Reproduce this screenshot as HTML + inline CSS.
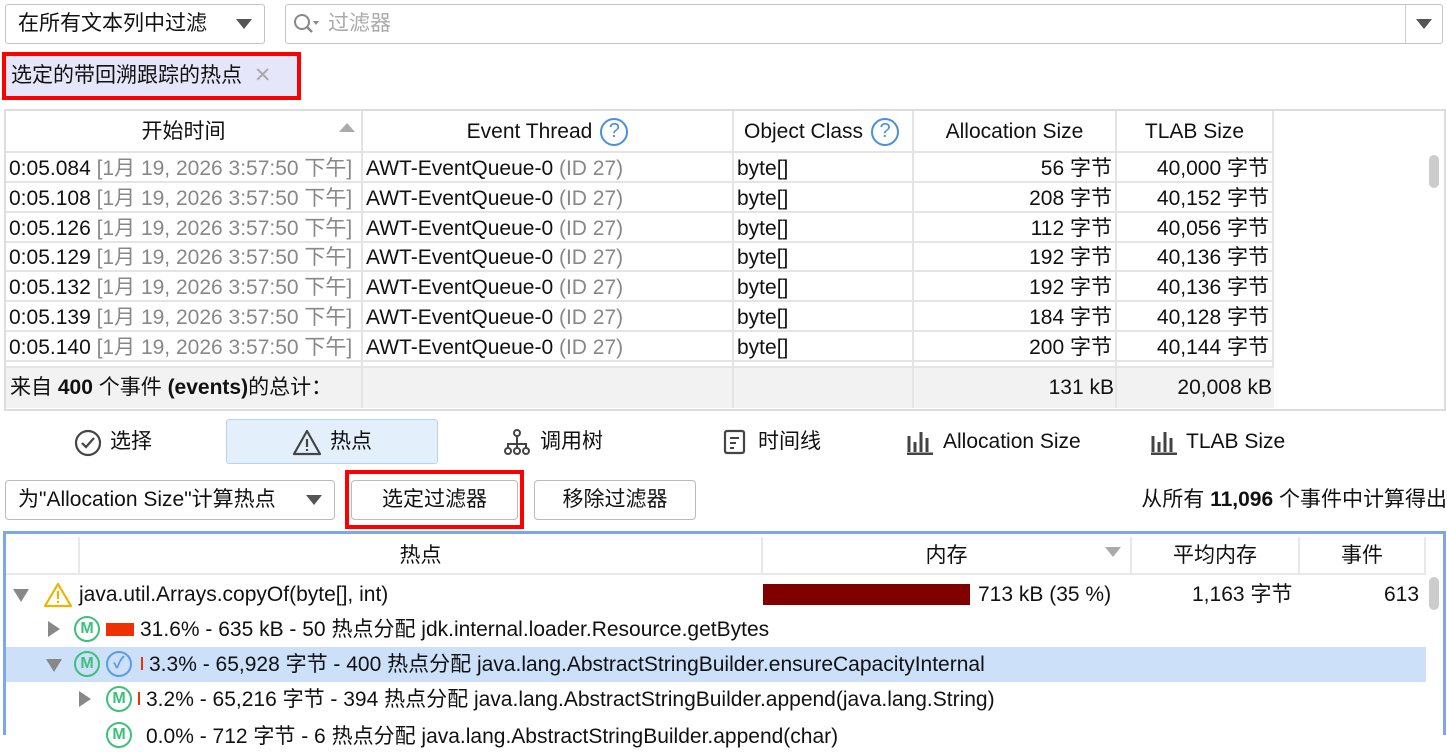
<!DOCTYPE html>
<html><head><meta charset="utf-8"><style>
*{box-sizing:border-box;margin:0;padding:0}
body{width:1447px;height:735px;overflow:hidden;background:#fff;font-family:"Liberation Sans","Noto Sans CJK SC",sans-serif;font-size:21px;color:#111;position:relative;letter-spacing:0}
.a{position:absolute;white-space:nowrap}
.box{position:absolute;border:1px solid #c4c4c4;border-radius:3px;background:#fff}
.tri{position:absolute;width:0;height:0;border-left:8px solid transparent;border-right:8px solid transparent;border-top:10px solid #555}
.g{color:#888}
.cell{position:absolute;height:30px;line-height:31px;white-space:nowrap;overflow:hidden;border-bottom:2px solid #e4e4e4;border-right:2px solid #e4e4e4}
.r{text-align:right;padding-right:3px}
.hd{position:absolute;top:111px;height:42px;line-height:42px;text-align:center;border-right:2px solid #e4e4e4;border-bottom:2px solid #e4e4e4}
.q{display:inline-block;width:28px;height:28px;border:2.5px solid #4a90e2;border-radius:50%;color:#4a90e2;font-size:20px;line-height:23px;text-align:center;vertical-align:middle;margin-left:8px}
.btn{position:absolute;border:1px solid #bbb;border-radius:4px;background:#fff;text-align:center;line-height:38px}
.th{position:absolute;top:537px;height:38px;line-height:38px;text-align:center;border-right:2px solid #e8e8e8;border-bottom:2px solid #e8e8e8}
.m{display:inline-block;width:26px;height:26px;border:2.5px solid #3cc07a;border-radius:50%;color:#3cc07a;font-size:16px;font-weight:bold;line-height:21px;text-align:center;vertical-align:middle}
.rt{position:absolute;width:0;height:0;border-top:8px solid transparent;border-bottom:8px solid transparent;border-left:12px solid #888}
.dt{position:absolute;width:0;height:0;border-left:8px solid transparent;border-right:8px solid transparent;border-top:13px solid #888}
</style></head><body>

<div class="box" style="left:5px;top:4px;width:260px;height:40px"></div>
<div class="a" style="left:18px;top:10px;line-height:28px">在所有文本列中过滤</div>
<div class="tri" style="left:236px;top:19px"></div>
<div class="box" style="left:285px;top:4px;width:1158px;height:40px"></div>
<div class="a" style="left:1405px;top:5px;width:1px;height:38px;background:#ccc"></div>
<div class="tri" style="left:1416px;top:19px"></div>
<svg class="a" style="left:292px;top:12px" width="32" height="24"><circle cx="10" cy="10" r="7" fill="none" stroke="#888" stroke-width="2"/><path d="M15 15l5 5" stroke="#888" stroke-width="2.5"/><path d="M21 9h6l-3 4z" fill="#888"/></svg>
<div class="a g" style="left:328px;top:10px;line-height:28px;color:#aaa">过滤器</div>

<div class="a" style="left:2px;top:52px;width:299px;height:48px;border:4px solid #f00;background:#e6e6fa"></div>
<div class="a" style="left:11px;top:61px;line-height:30px">选定的带回溯跟踪的热点 <span style="color:#aaa;margin-left:6px">✕</span></div>

<!-- table -->
<div class="a" style="left:4px;top:109px;width:1442px;height:302px;border:2px solid #ddd;background:#fff"></div>
<div class="hd" style="left:6px;width:357px">开始时间</div>
<div class="a" style="left:339px;top:123px;width:0;height:0;border-left:8px solid transparent;border-right:8px solid transparent;border-bottom:9px solid #aaa"></div>
<div class="hd" style="left:363px;width:371px">Event Thread<span class="q">?</span></div>
<div class="hd" style="left:734px;width:180px;text-align:left;padding-left:10px">Object Class<span class="q">?</span></div>
<div class="hd" style="left:914px;width:203px">Allocation Size</div>
<div class="hd" style="left:1117px;width:157px">TLAB Size</div>
<div class="a" style="left:1429px;top:155px;width:10px;height:33px;background:#ccc;border-radius:5px"></div>

<div id="rows"></div>
<script>
var d=[["084","56","40,000"],["108","208","40,152"],["126","112","40,056"],["129","192","40,136"],["132","192","40,136"],["139","184","40,128"],["140","200","40,144"],["","",""]];
var h="";
for(var i=0;i<8;i++){var t=153+i*29.8;var x=d[i];
h+='<div class="cell" style="left:6px;top:'+t+'px;width:357px;padding-left:3px">'+(x[0]?'0:05.'+x[0]+' <span class="g">[1月 19, 2026 3:57:50 下午]</span>':'')+'</div>';
h+='<div class="cell" style="left:363px;top:'+t+'px;width:371px;padding-left:3px">'+(x[0]?'AWT-EventQueue-0 <span class="g">(ID 27)</span>':'')+'</div>';
h+='<div class="cell" style="left:734px;top:'+t+'px;width:180px;padding-left:3px">'+(x[0]?'byte[]':'')+'</div>';
h+='<div class="cell r" style="left:914px;top:'+t+'px;width:203px">'+(x[1]?x[1]+' 字节':'')+'</div>';
h+='<div class="cell r" style="left:1117px;top:'+t+'px;width:157px">'+(x[2]?x[2]+' 字节':'')+'</div>';}
document.getElementById('rows').innerHTML=h;
</script>
<div class="a" style="left:6px;top:366px;width:1268px;height:42px;background:#f2f2f2;border-top:2px solid #e4e4e4"></div>
<div class="a" style="left:10px;top:368px;line-height:40px">来自 <b>400</b> 个事件 <b>(events)</b>的总计：</div>
<div class="a" style="left:361px;top:368px;width:2px;height:40px;background:#e4e4e4"></div>
<div class="a" style="left:732px;top:368px;width:2px;height:40px;background:#e4e4e4"></div>
<div class="a" style="left:912px;top:368px;width:2px;height:40px;background:#e4e4e4"></div>
<div class="a" style="left:1115px;top:368px;width:2px;height:40px;background:#e4e4e4"></div>
<div class="a" style="left:914px;top:368px;width:200px;line-height:40px;text-align:right">131 kB</div>
<div class="a" style="left:1117px;top:368px;width:155px;line-height:40px;text-align:right">20,008 kB</div>

<!-- tabs -->
<div class="a" style="left:226px;top:419px;width:212px;height:45px;background:#e4effc;border:1px solid #b9d3f0;border-radius:3px"></div>
<svg class="a" style="left:74px;top:429px" width="28" height="28"><circle cx="14" cy="14" r="12" fill="none" stroke="#444" stroke-width="2.2"/><path d="M8 14l4 4 8-9" fill="none" stroke="#444" stroke-width="2.2"/></svg>
<div class="a" style="left:110px;top:427px;line-height:30px">选择</div>
<svg class="a" style="left:292px;top:428px" width="30" height="28"><path d="M15 3L28 26H2z" fill="none" stroke="#444" stroke-width="2.2" stroke-linejoin="round"/><path d="M15 11v8M15 21v2" stroke="#444" stroke-width="2.2"/></svg>
<div class="a" style="left:330px;top:427px;line-height:30px">热点</div>
<svg class="a" style="left:503px;top:428px" width="28" height="28"><circle cx="14" cy="5" r="3" fill="none" stroke="#444" stroke-width="2"/><path d="M14 8v7M5 21v-5h18v5M14 15v6" stroke="#444" stroke-width="2" fill="none"/><circle cx="5" cy="23" r="3" fill="none" stroke="#444" stroke-width="2"/><circle cx="14" cy="23" r="3" fill="none" stroke="#444" stroke-width="2"/><circle cx="23" cy="23" r="3" fill="none" stroke="#444" stroke-width="2"/></svg>
<div class="a" style="left:540px;top:427px;line-height:30px">调用树</div>
<svg class="a" style="left:723px;top:429px" width="24" height="26"><rect x="2" y="2" width="19" height="22" rx="2" fill="none" stroke="#444" stroke-width="2.2"/><path d="M7 9h9M7 14h6M7 19h4" stroke="#444" stroke-width="2"/></svg>
<div class="a" style="left:758px;top:427px;line-height:30px">时间线</div>
<svg class="a" style="left:906px;top:429px" width="28" height="26"><path d="M3 7v16M9 13v10M15 3v20M21 9v14M1 25h26" stroke="#444" stroke-width="3"/></svg>
<div class="a" style="left:943px;top:427px;line-height:30px">Allocation Size</div>
<svg class="a" style="left:1150px;top:429px" width="28" height="26"><path d="M3 7v16M9 13v10M15 3v20M21 9v14M1 25h26" stroke="#444" stroke-width="3"/></svg>
<div class="a" style="left:1186px;top:427px;line-height:30px">TLAB Size</div>

<!-- controls -->
<div class="btn" style="left:5px;top:480px;width:330px;height:40px;text-align:left;padding-left:12px">为"Allocation Size"计算热点</div>
<div class="tri" style="left:306px;top:495px"></div>
<div class="a" style="left:345px;top:470px;width:179px;height:59px;border:4px solid #f00"></div>
<div class="btn" style="left:351px;top:480px;width:167px;height:40px">选定过滤器</div>
<div class="btn" style="left:534px;top:480px;width:162px;height:40px">移除过滤器</div>
<div class="a" style="right:0;top:485px;line-height:30px">从所有 <b>11,096</b> 个事件中计算得出</div>

<!-- tree -->
<div class="a" style="left:3px;top:531px;width:1443px;height:204px;border:3px solid #7aa9e6;border-bottom:none"></div>
<div class="th" style="left:6px;width:74px"></div>
<div class="th" style="left:80px;width:683px">热点</div>
<div class="th" style="left:763px;width:369px">内存</div>
<div class="a" style="left:1105px;top:547px;width:0;height:0;border-left:8px solid transparent;border-right:8px solid transparent;border-top:10px solid #aaa"></div>
<div class="th" style="left:1132px;width:168px">平均内存</div>
<div class="th" style="left:1300px;width:126px">事件</div>
<div class="a" style="left:1429px;top:577px;width:10px;height:33px;background:#ccc;border-radius:5px"></div>

<div class="a" style="left:6px;top:647px;width:1420px;height:35px;background:#cce0fa"></div>
<div class="dt" style="left:13px;top:589px"></div>
<svg class="a" style="left:43px;top:582px" width="30" height="26"><path d="M15 2L28 24H2z" fill="#fff" stroke="#f0b400" stroke-width="2.2" stroke-linejoin="round"/><path d="M15 9v8M15 19v2" stroke="#f0b400" stroke-width="2.2"/></svg>
<div class="a" style="left:79px;top:580px;line-height:30px">java.util.Arrays.copyOf(byte[], int)</div>
<div class="a" style="left:763px;top:584px;width:207px;height:21px;background:#800000"></div>
<div class="a" style="left:978px;top:580px;line-height:30px">713 kB (35 %)</div>
<div class="a" style="left:1192px;top:580px;line-height:30px">1,163 字节</div>
<div class="a" style="left:1384px;top:580px;line-height:30px">613</div>

<div class="rt" style="left:48px;top:621px"></div>
<div class="a" style="left:74px;top:615px;line-height:28px"><span class="m">M</span></div>
<div class="a" style="left:106px;top:623px;width:28px;height:13px;background:#f03000"></div>
<div class="a" style="left:140px;top:615px;line-height:30px">31.6% - 635 kB - 50 热点分配 jdk.internal.loader.Resource.getBytes</div>

<div class="dt" style="left:46px;top:659px"></div>
<div class="a" style="left:74px;top:650px;line-height:28px"><span class="m">M</span> <span class="m" style="border-color:#5a9be8;color:#5a9be8">✓</span></div>
<div class="a" style="left:141px;top:657px;width:2px;height:13px;background:#f03000"></div>
<div class="a" style="left:149px;top:650px;line-height:30px">3.3% - 65,928 字节 - 400 热点分配 java.lang.AbstractStringBuilder.ensureCapacityInternal</div>

<div class="rt" style="left:79px;top:691px"></div>
<div class="a" style="left:106px;top:685px;line-height:28px"><span class="m">M</span></div>
<div class="a" style="left:138px;top:692px;width:2px;height:13px;background:#f03000"></div>
<div class="a" style="left:146px;top:685px;line-height:30px">3.2% - 65,216 字节 - 394 热点分配 java.lang.AbstractStringBuilder.append(java.lang.String)</div>
<div class="a" style="left:106px;top:721px;line-height:28px"><span class="m">M</span></div>
<div class="a" style="left:146px;top:722px;line-height:30px">0.0% - 712 字节 - 6 热点分配 java.lang.AbstractStringBuilder.append(char)</div>
</body></html>
